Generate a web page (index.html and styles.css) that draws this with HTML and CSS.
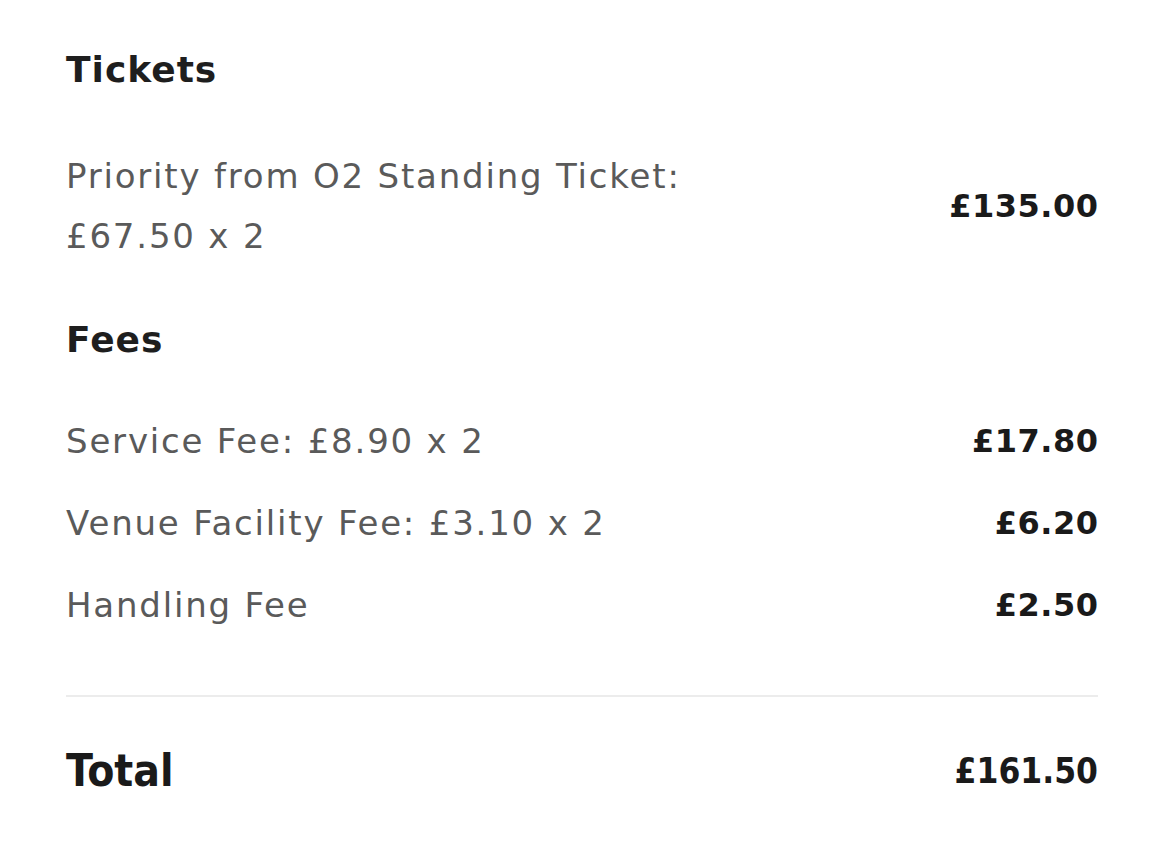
FILE: index.html
```html
<!DOCTYPE html>
<html>
<head>
<meta charset="utf-8">
<link rel="stylesheet" href="styles.css">
</head>
<body>
<div class="summary">
  <h2 class="heading">Tickets</h2>
  <div class="row row-ticket">
    <div class="label">Priority from O2 Standing Ticket:<br>£67.50 x 2</div>
    <div class="amount">£135.00</div>
  </div>
  <h2 class="heading heading-fees">Fees</h2>
  <div class="row"><div class="label">Service Fee: £8.90 x 2</div><div class="amount">£17.80</div></div>
  <div class="row"><div class="label">Venue Facility Fee: £3.10 x 2</div><div class="amount">£6.20</div></div>
  <div class="row"><div class="label">Handling Fee</div><div class="amount">£2.50</div></div>
  <hr class="divider">
  <div class="row total"><div class="total-label">Total</div><div class="total-amount">£161.50</div></div>
</div>
</body>
</html>
```
FILE: styles.css
```css
html, body { margin: 0; padding: 0; background: #fff; }
body { font-family: "DejaVu Sans", "Open Sans", sans-serif; color: #1a1a1a; }
.summary { width: 1032px; padding: 46px 0 0 66px; display: flex; flex-direction: column; }
.heading { margin: 0; font-size: 36px; font-weight: 700; line-height: 48px; color: #1e1e1e; letter-spacing: 1px; }
.heading-fees { margin-top: 50px; }
.row { display: flex; justify-content: space-between; align-items: center; font-size: 34px; line-height: 60px; }
.row-ticket { margin-top: 52px; }
.heading-fees + .row { margin-top: 47px; }
.row + .row { margin-top: 22px; }
.label { color: #5a5a5a; letter-spacing: 1.8px; }
.amount { font-weight: 700; color: #1a1a1a; font-size: 32px; letter-spacing: 0.5px; margin-right: -0.5px; }
.divider { border: 0; border-top: 2px solid #ececec; margin: 60px 0 0; width: 100%; }
.row.total { margin-top: 44px; }
.total-label { font-family: "DejaVu Sans Condensed", "DejaVu Sans", sans-serif; font-size: 44px; font-weight: 700; }
.total-amount { font-family: "DejaVu Sans Condensed", "DejaVu Sans", sans-serif; font-size: 35px; font-weight: 700; }
```
